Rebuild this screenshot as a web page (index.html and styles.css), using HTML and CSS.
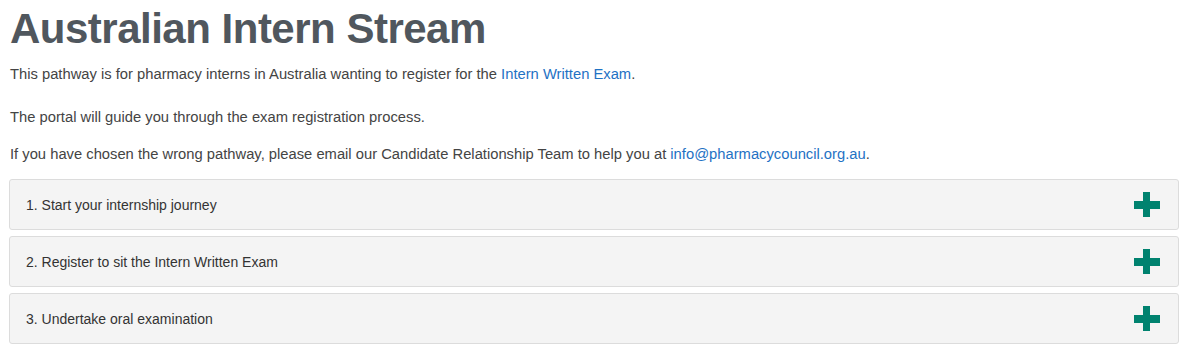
FILE: index.html
```html
<!DOCTYPE html>
<html lang="en">
<head>
    <meta charset="UTF-8">
    <title>Australian Intern Stream</title>
    <link rel="stylesheet" href="styles.css">
</head>
<body>
    <div class="container">
        <h1>Australian Intern Stream</h1>
        <p class="lead">This pathway is for pharmacy interns in Australia wanting to register for the <a href="#">Intern Written Exam</a>.</p>
        <p>The portal will guide you through the exam registration process.</p>
        <p class="contact">If you have chosen the wrong pathway, please email our Candidate Relationship Team to help you at <a href="#">info@pharmacycouncil.org.au</a>.</p>

        <div class="steps">
            <div class="step">
                <span>1. Start your internship journey</span>
                <span class="plus"></span>
            </div>
            <div class="step">
                <span>2. Register to sit the Intern Written Exam</span>
                <span class="plus"></span>
            </div>
            <div class="step">
                <span>3. Undertake oral examination</span>
                <span class="plus"></span>
            </div>
        </div>
    </div>
</body>
</html>
```

FILE: styles.css
```css
* { box-sizing: border-box; }
body {
    font-family: 'Liberation Sans', Arial, sans-serif;
    margin: 0;
    background: #fff;
    color: #444;
    font-size: 14.75px;
}
.container {
    width: 1170px;
    margin-left: 9px;
}
h1 {
    margin: 5px 0 0 1px;
    font-size: 42px;
    line-height: 48px;
    letter-spacing: -0.5px;
    font-weight: bold;
    color: #50575e;
}
p {
    margin: 0 0 17px 1px;
    line-height: 20px;
}
p.lead {
    margin-top: 11px;
    margin-bottom: 23px;
}
p.contact {
    margin-bottom: 15px;
}
a {
    color: #1f72c4;
    text-decoration: none;
}
.steps {
    display: flex;
    flex-direction: column;
    gap: 6px;
}
.step {
    height: 51px;
    background: #f4f4f4;
    border: 1px solid #dcdcdc;
    border-radius: 3px;
    display: flex;
    align-items: center;
    justify-content: space-between;
    padding: 0 18px 0 16px;
    font-size: 14px;
    color: #333;
}
.plus {
    position: relative;
    width: 26px;
    height: 25px;
}
.plus::before,
.plus::after {
    content: "";
    position: absolute;
    background: #00826f;
}
.plus::before {
    left: 9px;
    top: 0;
    width: 7px;
    height: 25px;
}
.plus::after {
    left: 0;
    top: 9px;
    width: 26px;
    height: 8px;
}
```
